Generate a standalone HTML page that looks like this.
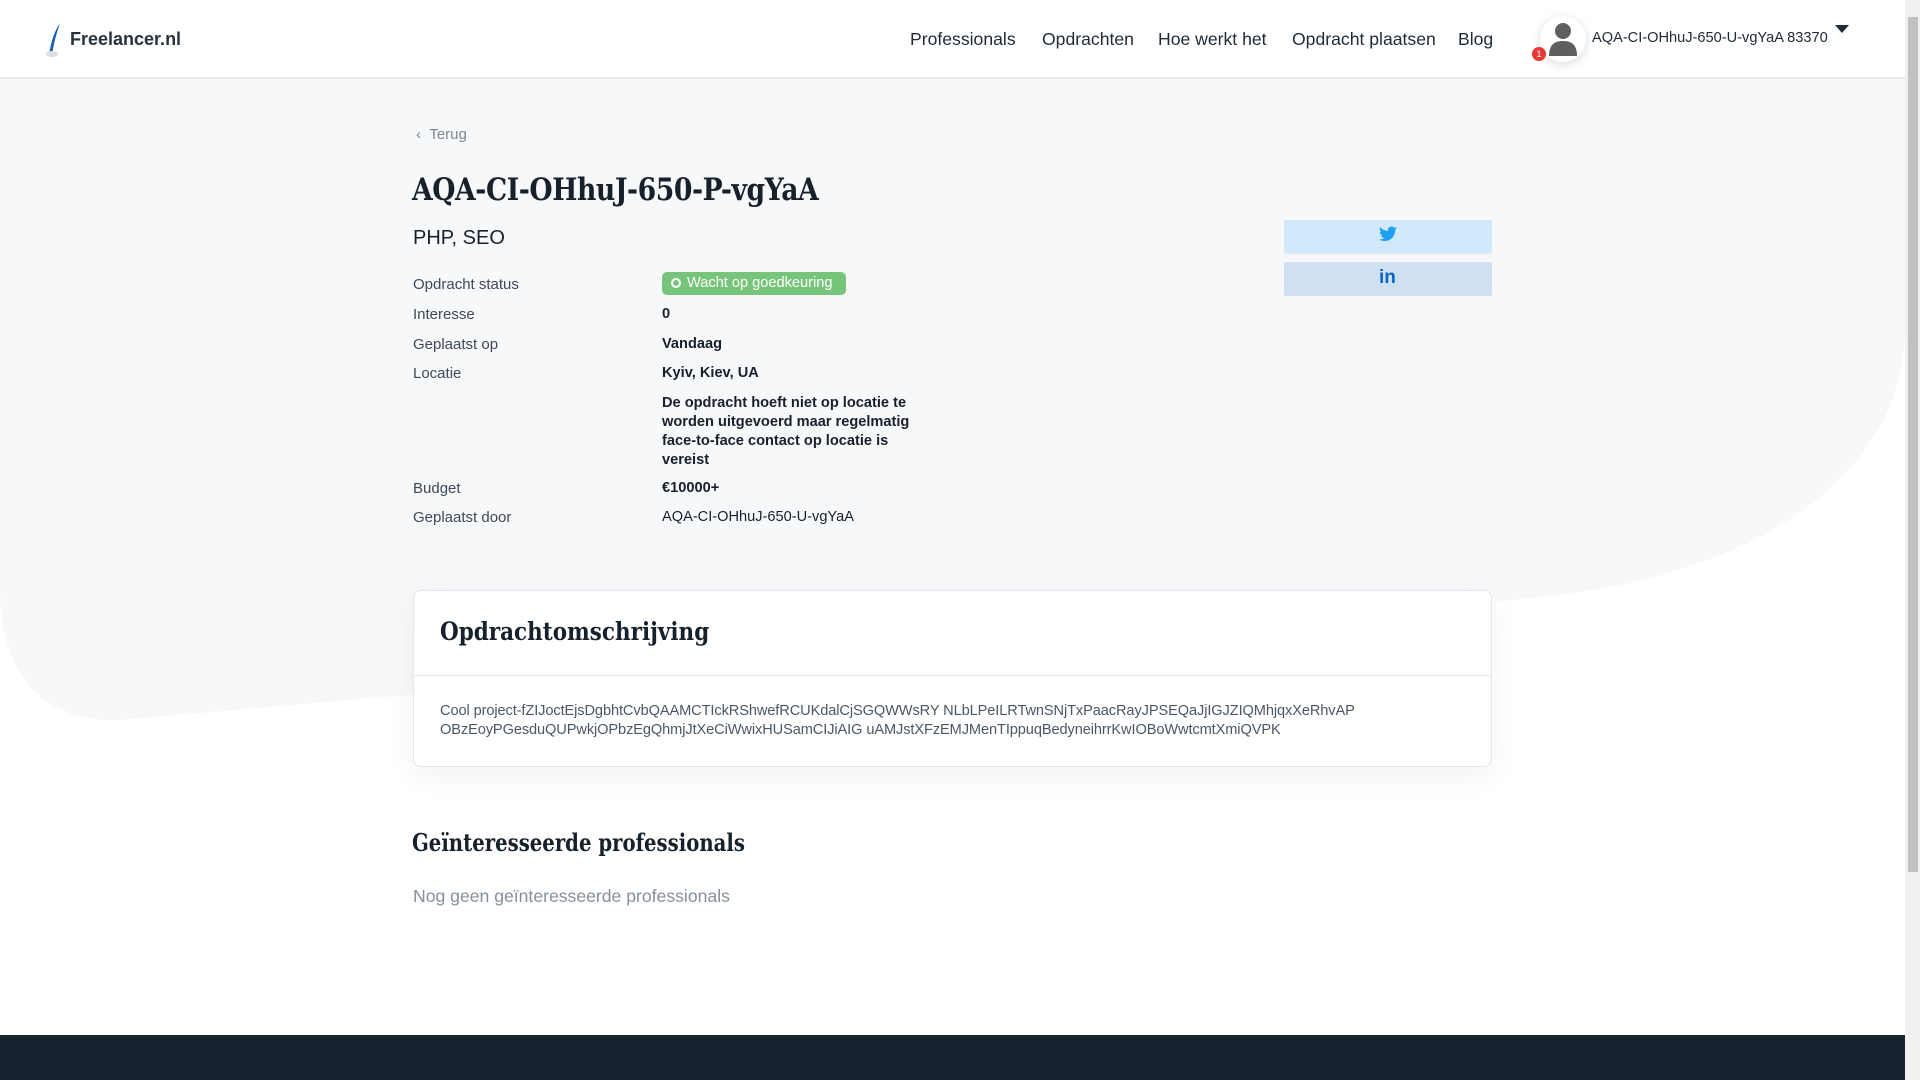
<!DOCTYPE html>
<html><head><meta charset="utf-8"><style>
*{margin:0;padding:0;box-sizing:border-box}
body{width:1920px;height:1080px;overflow:hidden;background:#fff;font-family:"Liberation Sans",sans-serif;color:#1b2733;position:relative}
.abs{position:absolute;white-space:nowrap}
.hdr{position:absolute;left:0;top:0;width:1905px;height:79px;background:#fff;border-bottom:2px solid #e8eaed}
.nav{font-size:17.6px;color:#1e2a36;top:29px}
.serif{font-family:"DejaVu Serif","Liberation Serif",serif;font-weight:bold;color:#16212c;transform-origin:0 50%}
.lbl{font-size:15px;color:#3c4a58;left:413px}
.val{font-size:14.6px;color:#16212c;left:662px;font-weight:bold}
</style></head><body>
<svg class="abs" style="left:0;top:0" width="1905" height="1080"><path d="M0,79 H1905 V330 C1905,470 1760,590 1480,602 L120,720 C40,724 0,670 0,590 Z" fill="#f7f8fa"/></svg>
<div class="hdr"></div>
<svg class="abs" style="left:44px;top:22px" width="24" height="36"><path d="M16,1 C10,10 7,20 5,33 L8,33 C10,20 13,10 16,1Z" fill="#1b5fb0"/><ellipse cx="8" cy="32" rx="6" ry="3" fill="#ddd"/></svg>
<div class="abs" style="left:70px;top:29px;font-size:18px;font-weight:bold;color:#27323d">Freelancer.nl</div>
<div class="abs nav" style="left:910px">Professionals</div>
<div class="abs nav" style="left:1042px">Opdrachten</div>
<div class="abs nav" style="left:1158px">Hoe werkt het</div>
<div class="abs nav" style="left:1292px">Opdracht plaatsen</div>
<div class="abs nav" style="left:1458px">Blog</div>
<div class="abs" style="left:1540px;top:16px;width:46px;height:46px;border-radius:50%;background:#fff;box-shadow:0 2px 10px rgba(0,0,0,.15)"></div>
<svg class="abs" style="left:1546px;top:20px" width="34" height="38"><circle cx="17" cy="11" r="8" fill="#5f5f5f"/><path d="M3,36 C3,24 9,21 17,21 C25,21 31,24 31,36Z" fill="#5f5f5f"/></svg>
<div class="abs" style="left:1532px;top:47px;width:14px;height:14px;border-radius:50%;background:#e53935;color:#fff;font-size:9px;text-align:center;line-height:14px">1</div>
<div class="abs" style="left:1592px;top:30px;font-size:14.6px;color:#1e2a36">AQA-CI-OHhuJ-650-U-vgYaA 83370</div>
<div class="abs" style="left:1835px;top:25px;width:0;height:0;border-left:7px solid transparent;border-right:7px solid transparent;border-top:8px solid #1e2a36"></div>
<div class="abs" style="left:1905px;top:0;width:15px;height:1080px;background:#f1f1f1"></div>
<div class="abs" style="left:1908px;top:17px;width:10px;height:855px;background:#c1c1c1"></div>

<div class="abs" style="left:416px;top:126px;font-size:15px;color:#7b8794">‹&nbsp;&nbsp;Terug</div>
<div class="abs serif" style="left:412px;top:172px;font-size:31px;letter-spacing:-0.5px;transform:scaleX(0.86)">AQA-CI-OHhuJ-650-P-vgYaA</div>
<div class="abs" style="left:413px;top:227px;font-size:20px;color:#16212c">PHP, SEO</div>
<div class="abs lbl" style="top:276px">Opdracht status</div>
<div class="abs" style="left:662px;top:272px;width:184px;height:23px;border-radius:5px;background:#77c57a;color:#fff;font-size:14.6px;line-height:23px;padding-left:9px"><span style="display:inline-block;width:10px;height:10px;border:2px solid #fff;border-radius:50%;vertical-align:-1px;margin-right:6px"></span>Wacht op goedkeuring</div>
<div class="abs lbl" style="top:306px">Interesse</div><div class="abs val" style="top:306px">0</div>
<div class="abs lbl" style="top:336px">Geplaatst op</div><div class="abs val" style="top:336px">Vandaag</div>
<div class="abs lbl" style="top:365px">Locatie</div><div class="abs val" style="top:365px">Kyiv, Kiev, UA</div>
<div class="abs val" style="top:394px;line-height:19px;white-space:normal;width:255px">De opdracht hoeft niet op locatie te worden uitgevoerd maar regelmatig face-to-face contact op locatie is vereist</div>
<div class="abs lbl" style="top:480px">Budget</div><div class="abs val" style="top:480px">€10000+</div>
<div class="abs lbl" style="top:509px">Geplaatst door</div><div class="abs val" style="top:509px;font-weight:normal">AQA-CI-OHhuJ-650-U-vgYaA</div>

<div class="abs" style="left:1284px;top:220px;width:208px;height:34px;background:#d1e9fb;border-radius:2px"></div>
<svg class="abs" style="left:1379px;top:226px" width="18" height="16" viewBox="0 0 24 20"><path d="M24,2.4 C23.1,2.8 22.2,3 21.2,3.2 C22.2,2.6 23,1.6 23.3,0.5 C22.4,1 21.4,1.4 20.3,1.6 C19.4,0.6 18.1,0 16.7,0 C14,0 11.8,2.2 11.8,4.9 C11.8,5.3 11.8,5.7 11.9,6 C7.8,5.8 4.2,3.9 1.7,0.9 C1.3,1.6 1,2.5 1,3.4 C1,5.1 1.9,6.6 3.2,7.5 C2.4,7.5 1.6,7.2 1,6.9 C1,9.3 2.7,11.3 4.9,11.7 C4.5,11.8 4.1,11.9 3.6,11.9 C3.3,11.9 3,11.9 2.7,11.8 C3.3,13.8 5.1,15.2 7.300,15.2 C5.6,16.5 3.5,17.3 1.2,17.3 C0.8,17.3 0.4,17.3 0,17.2 C2.2,18.6 4.8,19.4 7.5,19.4 C16.6,19.4 21.5,11.9 21.5,5.4 L21.5,4.8 C22.5,4.1 23.3,3.3 24,2.4Z" fill="#1da1f2"/></svg>
<div class="abs" style="left:1284px;top:262px;width:208px;height:34px;background:#cfe0f3;border-radius:2px"></div>
<div class="abs" style="left:1379px;top:267px;font-size:19px;font-weight:bold;color:#0a66c2">in</div>

<div class="abs" style="left:413px;top:590px;width:1079px;height:177px;background:#fff;border:1px solid #e3e6ea;border-radius:8px;box-shadow:0 10px 30px rgba(0,0,0,.05)"></div>
<div class="abs" style="left:414px;top:675px;width:1077px;height:1px;background:#e3e6ea"></div>
<div class="abs serif" style="left:440px;top:617px;font-size:25px;transform:scaleX(0.86)">Opdrachtomschrijving</div>
<div class="abs" style="left:440px;top:702px;font-size:14.6px;line-height:19px;color:#4a5866;letter-spacing:-0.1px">Cool project-fZIJoctEjsDgbhtCvbQAAMCTIckRShwefRCUKdalCjSGQWWsRY NLbLPeILRTwnSNjTxPaacRayJPSEQaJjIGJZIQMhjqxXeRhvAP<br>OBzEoyPGesduQUPwkjOPbzEgQhmjJtXeCiWwixHUSamCIJiAIG uAMJstXFzEMJMenTIppuqBedyneihrrKwIOBoWwtcmtXmiQVPK</div>
<div class="abs serif" style="left:412px;top:828px;font-size:24px;transform:scaleX(0.82)">Geïnteresseerde professionals</div>
<div class="abs" style="left:413px;top:886px;font-size:17.6px;color:#85909b">Nog geen geïnteresseerde professionals</div>
<div class="abs" style="left:0;top:1035px;width:1905px;height:45px;background:#17222e"></div>
</body></html>
